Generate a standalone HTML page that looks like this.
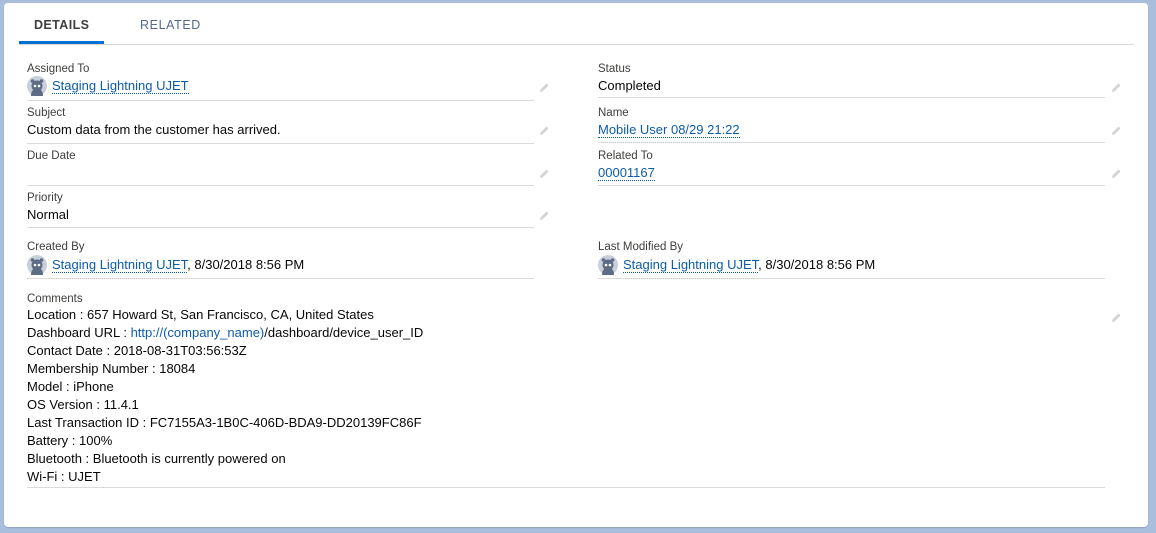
<!DOCTYPE html>
<html><head><meta charset="utf-8">
<style>
*{margin:0;padding:0;box-sizing:border-box}
body{width:1156px;height:533px;background:#a9bddd;font-family:"Liberation Sans",sans-serif;position:relative;overflow:hidden}
.card{position:absolute;left:4px;top:3px;width:1144px;height:524px;background:#fff;border-radius:4px;box-shadow:0 1px 1px rgba(0,0,0,.15)}
.a{position:absolute;white-space:nowrap}
.tab{font-size:12.5px;font-weight:bold;letter-spacing:.4px;top:18px}
.lbl{font-size:11.5px;color:#3e3e3c}
.val{font-size:13px;color:#080707}
.lnk{color:#006dcc;color:#0b5cab;border-bottom:1px dotted #0b5cab;line-height:15px}
.line{position:absolute;height:1px;background:#dddbda}
.pen{position:absolute;width:12px;height:12px}
.av{position:absolute;width:20px;height:20px}
.cm{font-size:13px;color:#080707;line-height:18px}
</style></head><body>
<div class="card"></div>
<div class="a tab" style="left:34px;color:#3e3e3c">DETAILS</div>
<div class="a tab" style="left:140px;color:#54698d;font-weight:normal;letter-spacing:.6px">RELATED</div>
<div class="line" style="left:19px;top:44px;width:1115px;background:#d8d8d8"></div>
<div style="position:absolute;left:19px;top:41px;width:85px;height:3px;background:#0070d2"></div>

<svg width="0" height="0" style="position:absolute"><defs>
<symbol id="avs" viewBox="0 0 20 20"><circle cx="10" cy="10" r="10" fill="#c8d0dc"/><path d="M4 20 C4 15 6 13 10 13 C14 13 16 15 16 20Z" fill="#5d6b85"/><circle cx="10" cy="10" r="5.5" fill="#5d6b85"/><circle cx="5.5" cy="5" r="1.8" fill="#5d6b85"/><circle cx="14.5" cy="5" r="1.8" fill="#5d6b85"/><circle cx="8" cy="10" r="1.3" fill="#fff"/><circle cx="12" cy="10" r="1.3" fill="#fff"/></symbol>
<symbol id="pn" viewBox="0 0 12 12"><path d="M2 10 L2.5 7.5 L8.5 1.5 L10.5 3.5 L4.5 9.5Z" fill="#d4d4d4"/></symbol>
</defs></svg>

<!-- left column -->
<div class="a lbl" style="left:27px;top:63px">Assigned To</div>
<svg class="av" style="left:27px;top:76px"><use href="#avs"/></svg>
<div class="a val" style="left:52px;top:78px"><span class="lnk">Staging Lightning UJET</span></div>
<div class="line" style="left:27px;top:100px;width:507px"></div>
<svg class="pen" style="left:538px;top:82px"><use href="#pn"/></svg>

<div class="a lbl" style="left:27px;top:107px">Subject</div>
<div class="a val" style="left:27px;top:122px">Custom data from the customer has arrived.</div>
<div class="line" style="left:27px;top:143px;width:507px"></div>
<svg class="pen" style="left:538px;top:125px"><use href="#pn"/></svg>

<div class="a lbl" style="left:27px;top:150px">Due Date</div>
<div class="line" style="left:27px;top:185px;width:507px"></div>
<svg class="pen" style="left:538px;top:168px"><use href="#pn"/></svg>

<div class="a lbl" style="left:27px;top:192px">Priority</div>
<div class="a val" style="left:27px;top:207px">Normal</div>
<div class="line" style="left:27px;top:227px;width:507px"></div>
<svg class="pen" style="left:538px;top:210px"><use href="#pn"/></svg>

<div class="a lbl" style="left:27px;top:241px">Created By</div>
<svg class="av" style="left:27px;top:255px"><use href="#avs"/></svg>
<div class="a val" style="left:52px;top:257px"><span class="lnk">Staging Lightning UJET</span>, 8/30/2018 8:56 PM</div>
<div class="line" style="left:27px;top:278px;width:507px"></div>

<!-- right column -->
<div class="a lbl" style="left:598px;top:63px">Status</div>
<div class="a val" style="left:598px;top:78px">Completed</div>
<div class="line" style="left:598px;top:97px;width:507px"></div>
<svg class="pen" style="left:1110px;top:82px"><use href="#pn"/></svg>

<div class="a lbl" style="left:598px;top:107px">Name</div>
<div class="a val" style="left:598px;top:122px"><span class="lnk">Mobile User 08/29 21:22</span></div>
<div class="line" style="left:598px;top:142px;width:507px"></div>
<svg class="pen" style="left:1110px;top:125px"><use href="#pn"/></svg>

<div class="a lbl" style="left:598px;top:150px">Related To</div>
<div class="a val" style="left:598px;top:165px"><span class="lnk">00001167</span></div>
<div class="line" style="left:598px;top:185px;width:507px"></div>
<svg class="pen" style="left:1110px;top:168px"><use href="#pn"/></svg>

<div class="a lbl" style="left:598px;top:241px">Last Modified By</div>
<svg class="av" style="left:598px;top:255px"><use href="#avs"/></svg>
<div class="a val" style="left:623px;top:257px"><span class="lnk">Staging Lightning UJET</span>, 8/30/2018 8:56 PM</div>
<div class="line" style="left:598px;top:278px;width:507px"></div>

<!-- comments -->
<div class="a lbl" style="left:27px;top:293px">Comments</div>
<div class="a cm" style="left:27px;top:306px">
Location : 657 Howard St, San Francisco, CA, United States<br>
Dashboard URL : <span style="color:#0b5cab">http://(company_name)</span>/dashboard/device_user_ID<br>
Contact Date : 2018-08-31T03:56:53Z<br>
Membership Number : 18084<br>
Model : iPhone<br>
OS Version : 11.4.1<br>
Last Transaction ID : FC7155A3-1B0C-406D-BDA9-DD20139FC86F<br>
Battery : 100%<br>
Bluetooth : Bluetooth is currently powered on<br>
Wi-Fi : UJET
</div>
<div class="line" style="left:27px;top:487px;width:1078px"></div>
<svg class="pen" style="left:1110px;top:312px"><use href="#pn"/></svg>
</body></html>
